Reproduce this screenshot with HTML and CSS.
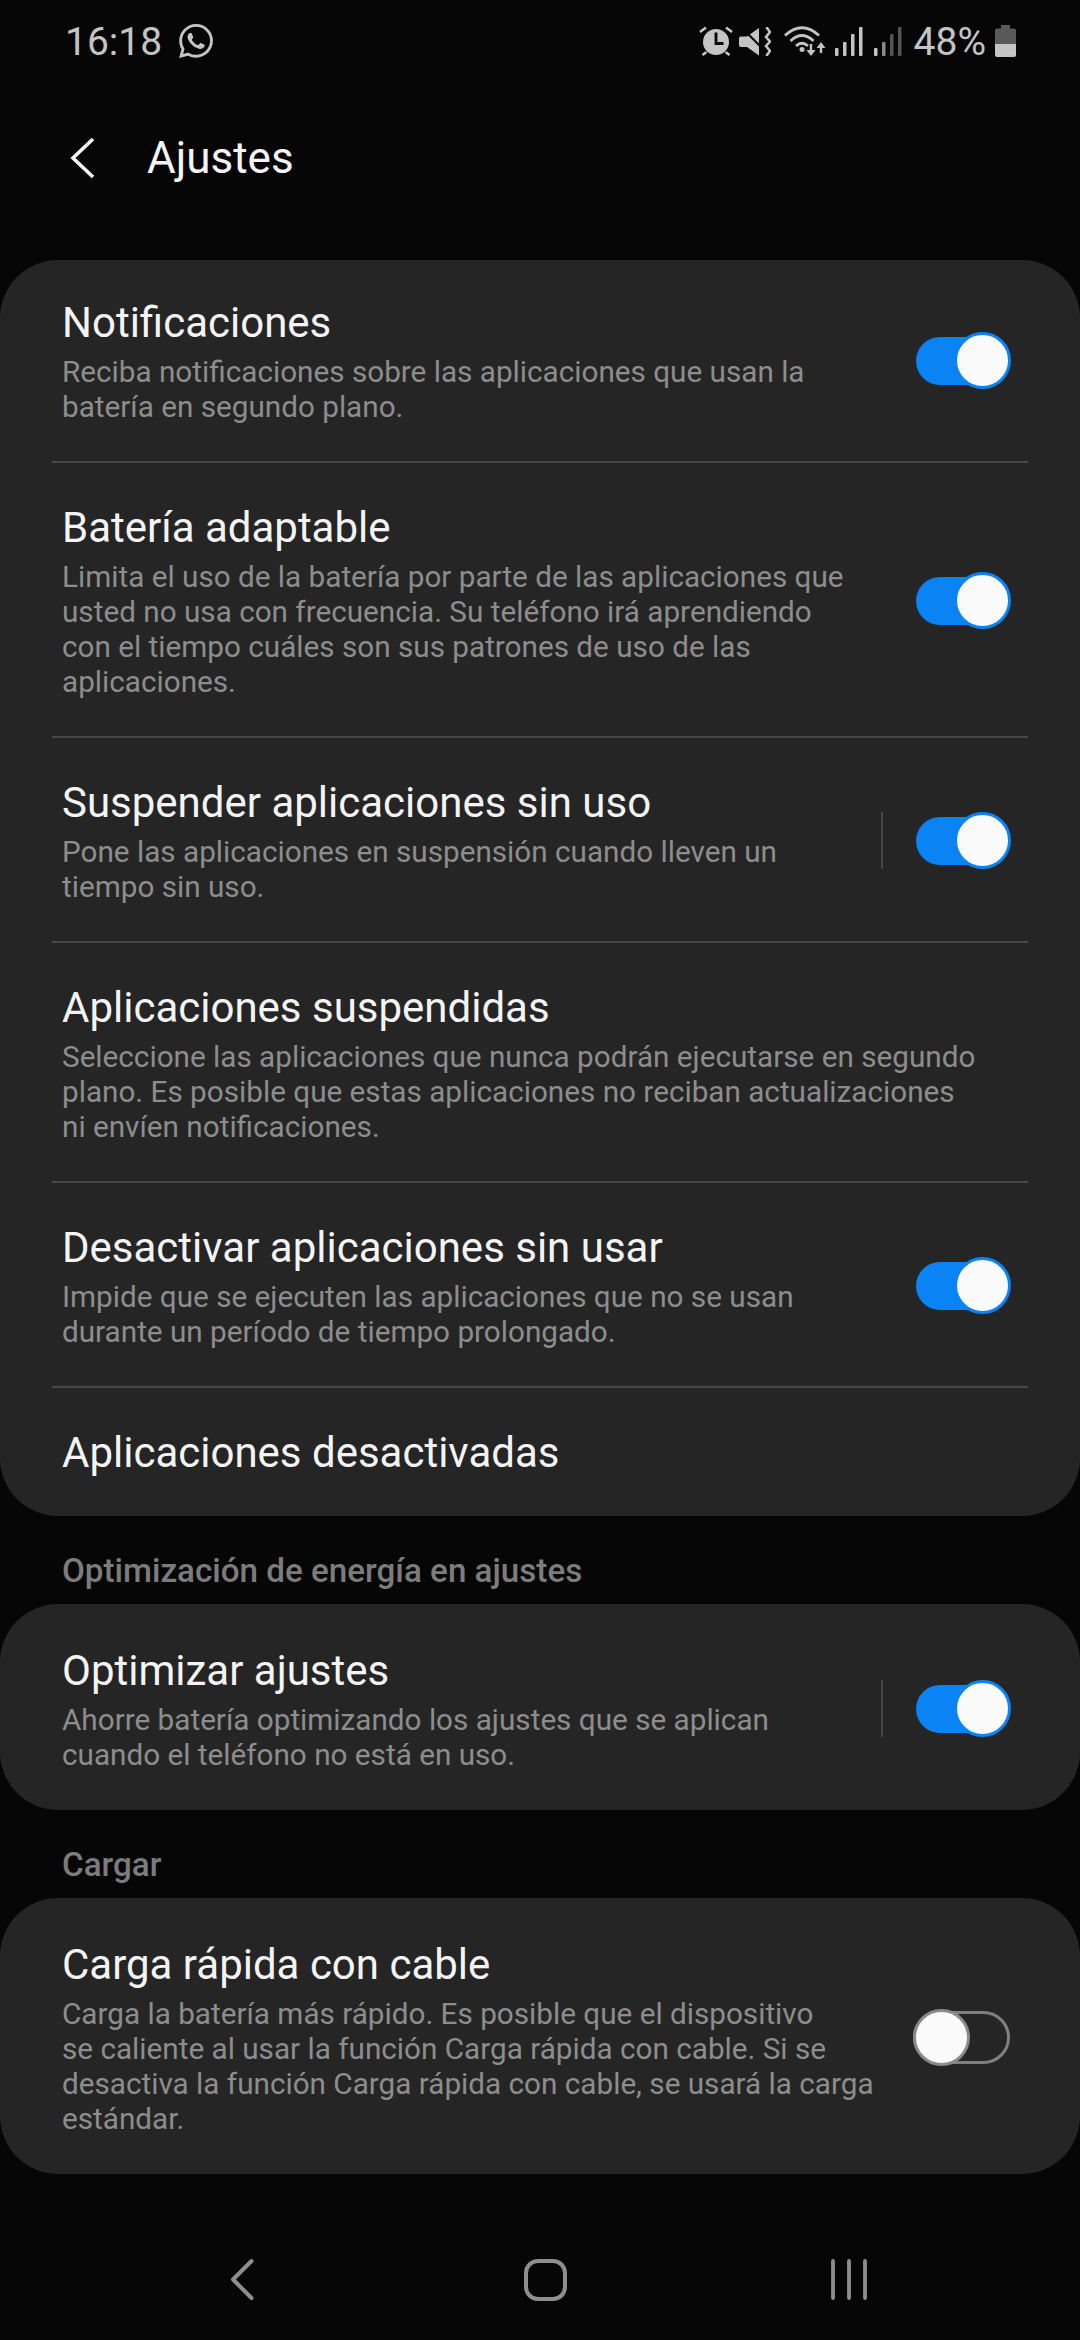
FILE: index.html
```html
<!DOCTYPE html>
<html lang="es">
<head>
  <meta charset="UTF-8">
  <meta name="viewport" content="width=device-width, initial-scale=1.0">
  <title>Ajustes</title>
  <link rel="stylesheet" href="styles.css">
</head>
<body>

  <div class="status-bar">
    <div class="status-left">
      <span class="status-time">16:18</span>
      <svg class="icon-whatsapp" viewBox="0 0 24 24" width="34" height="34"><path fill="#c4c4c4" d="M17.472 14.382c-.297-.149-1.758-.867-2.03-.967-.273-.099-.471-.148-.67.15-.197.297-.767.966-.94 1.164-.173.199-.347.223-.644.075-.297-.15-1.255-.463-2.39-1.475-.883-.788-1.48-1.761-1.653-2.059-.173-.297-.018-.458.13-.606.134-.133.298-.347.446-.52.149-.174.198-.298.298-.497.099-.198.05-.371-.025-.52-.075-.149-.669-1.612-.916-2.207-.242-.579-.487-.5-.669-.51-.173-.008-.371-.01-.57-.01-.198 0-.52.074-.792.372-.272.297-1.04 1.016-1.04 2.479 0 1.462 1.065 2.875 1.213 3.074.149.198 2.096 3.2 5.077 4.487.709.306 1.262.489 1.694.625.712.227 1.36.195 1.871.118.571-.085 1.758-.719 2.006-1.413.248-.694.248-1.289.173-1.413-.074-.124-.272-.198-.57-.347m-5.421 7.403h-.004a9.87 9.87 0 01-5.031-1.378l-.361-.214-3.741.982.998-3.648-.235-.374a9.86 9.86 0 01-1.51-5.26c.001-5.45 4.436-9.884 9.888-9.884 2.64 0 5.122 1.03 6.988 2.898a9.825 9.825 0 012.893 6.994c-.003 5.45-4.437 9.884-9.885 9.884m8.413-18.297A11.815 11.815 0 0012.05 0C5.495 0 .16 5.335.157 11.892c0 2.096.547 4.142 1.588 5.945L.057 24l6.305-1.654a11.882 11.882 0 005.683 1.448h.005c6.554 0 11.89-5.335 11.893-11.893a11.821 11.821 0 00-3.48-8.413Z"/></svg>
    </div>
    <div class="status-right">
      <!-- alarma -->
      <svg class="icon-alarm" viewBox="0 0 34 30" width="34" height="30">
        <circle cx="17" cy="16" r="13" fill="#c4c4c4"/>
        <path d="M1 6l6-4.500M33 6l-6-4.500M3.500 29l4-3M30.500 29l-4-3" stroke="#c4c4c4" stroke-width="2.600" fill="none"/>
        <path d="M17 6.500V17.500H24.500" stroke="#060606" stroke-width="2.800" fill="none"/>
      </svg>
      <!-- silencio + vibracion -->
      <svg class="icon-mute" viewBox="0 0 32 29" width="32" height="29">
        <path fill="#c4c4c4" d="M0 11.500Q0 9.500 2 9.500H8L20 1V28.500L8 20H2Q0 20 0 18Z"/>
        <path stroke="#060606" stroke-width="2.200" d="M3 1L22 20"/>
        <path stroke="#c4c4c4" stroke-width="2.600" fill="none" stroke-linecap="round" d="M28 1L31 5L27 10L31 14.500L27 19L31 24L28 28"/>
      </svg>
      <!-- wifi -->
      <svg class="icon-wifi" viewBox="0 0 43 32" width="43" height="32">
        <g stroke="#c4c4c4" stroke-width="2.800" fill="none">
          <path d="M1 10.500Q18 -5 35 10.500"/>
          <path d="M6.500 16Q18 5 29.500 16"/>
          <path d="M12 21Q18 15.500 24 21"/>
        </g>
        <circle cx="18" cy="24.500" r="2.500" fill="#c4c4c4"/>
        <path fill="#c4c4c4" d="M25.800 19h2.400v6h3.300L27 31l-4.500-6h3.300ZM35.800 28h2.400v-5h3.300L37 17l-4.500 6h3.300Z"/>
      </svg>
      <!-- señal 1 -->
      <svg class="icon-signal" viewBox="0 0 28 29" width="28" height="29">
        <g fill="#c4c4c4">
          <rect x="0" y="21" width="3.500" height="8" rx="1"/>
          <rect x="8" y="15" width="3.500" height="14" rx="1"/>
          <rect x="16" y="7" width="3.500" height="22" rx="1"/>
          <rect x="24" y="0" width="3.500" height="29" rx="1"/>
        </g>
      </svg>
      <!-- señal 2 -->
      <svg class="icon-signal second" viewBox="0 0 28 29" width="28" height="29">
        <rect x="0" y="21" width="3.500" height="8" rx="1" fill="#c4c4c4"/>
        <rect x="8" y="15" width="3.500" height="14" rx="1" fill="#8a8a8a"/>
        <rect x="16" y="7" width="3.500" height="22" rx="1" fill="#555"/>
        <rect x="24" y="0" width="3.500" height="29" rx="1" fill="#555"/>
      </svg>
      <span class="status-percent">48%</span>
      <!-- bateria -->
      <svg class="icon-battery" viewBox="0 0 21 32" width="21" height="32">
        <path fill="#595959" d="M6 0h9v3.500h4q2 0 2 2V19H0V5.500q0-2 2-2h4Z"/>
        <path fill="#c4c4c4" d="M0 19h21v11q0 2-2 2H2q-2 0-2-2Z"/>
      </svg>
    </div>
  </div>

  <header class="app-header">
    <svg class="back-arrow" viewBox="0 0 26 42" width="26" height="42"><path d="M24 2L4 21L24 40" stroke="#f5f5f5" stroke-width="3.600" fill="none"/></svg>
    <h1>Ajustes</h1>
  </header>

  <section class="card">
    <div class="row first">
      <div class="row-text">
        <div class="row-title">Notificaciones</div>
        <div class="row-desc">Reciba notificaciones sobre las aplicaciones que usan la<br>batería en segundo plano.</div>
      </div>
      <div class="toggle on"><span class="thumb"></span></div>
    </div>
    <div class="row">
      <div class="row-text">
        <div class="row-title">Batería adaptable</div>
        <div class="row-desc">Limita el uso de la batería por parte de las aplicaciones que<br>usted no usa con frecuencia. Su teléfono irá aprendiendo<br>con el tiempo cuáles son sus patrones de uso de las<br>aplicaciones.</div>
      </div>
      <div class="toggle on"><span class="thumb"></span></div>
    </div>
    <div class="row">
      <div class="row-text">
        <div class="row-title">Suspender aplicaciones sin uso</div>
        <div class="row-desc">Pone las aplicaciones en suspensión cuando lleven un<br>tiempo sin uso.</div>
      </div>
      <span class="v-line"></span>
      <div class="toggle on"><span class="thumb"></span></div>
    </div>
    <div class="row">
      <div class="row-text">
        <div class="row-title">Aplicaciones suspendidas</div>
        <div class="row-desc">Seleccione las aplicaciones que nunca podrán ejecutarse en segundo<br>plano. Es posible que estas aplicaciones no reciban actualizaciones<br>ni envíen notificaciones.</div>
      </div>
    </div>
    <div class="row">
      <div class="row-text">
        <div class="row-title">Desactivar aplicaciones sin usar</div>
        <div class="row-desc">Impide que se ejecuten las aplicaciones que no se usan<br>durante un período de tiempo prolongado.</div>
      </div>
      <div class="toggle on"><span class="thumb"></span></div>
    </div>
    <div class="row">
      <div class="row-text">
        <div class="row-title">Aplicaciones desactivadas</div>
      </div>
    </div>
  </section>

  <h2 class="section-label">Optimización de energía en ajustes</h2>

  <section class="card single">
    <div class="row">
      <div class="row-text">
        <div class="row-title">Optimizar ajustes</div>
        <div class="row-desc">Ahorre batería optimizando los ajustes que se aplican<br>cuando el teléfono no está en uso.</div>
      </div>
      <span class="v-line"></span>
      <div class="toggle on"><span class="thumb"></span></div>
    </div>
  </section>

  <h2 class="section-label">Cargar</h2>

  <section class="card single">
    <div class="row">
      <div class="row-text">
        <div class="row-title">Carga rápida con cable</div>
        <div class="row-desc">Carga la batería más rápido. Es posible que el dispositivo<br>se caliente al usar la función Carga rápida con cable. Si se<br>desactiva la función Carga rápida con cable, se usará la carga<br>estándar.</div>
      </div>
      <div class="toggle off"><span class="thumb"></span></div>
    </div>
  </section>

  <nav class="nav-bar">
    <svg viewBox="0 0 24 43" width="24" height="43"><path d="M21.500 3L3 21.500L21.500 40" stroke="#8e8e8e" stroke-width="4" stroke-linecap="round" stroke-linejoin="round" fill="none"/></svg>
    <span class="nav-home"></span>
    <svg viewBox="0 0 36 41" width="36" height="41"><path d="M2 2V39M18 2V39M34 2V39" stroke="#8e8e8e" stroke-width="3.800" stroke-linecap="round" fill="none"/></svg>
  </nav>

</body>
</html>
```

FILE: styles.css
```css
:root {
  --cor-fundo: #060606;
  --cor-card: #252525;
  --cor-titulo: #f4f4f4;
  --cor-desc: #8d8d8d;
  --cor-linha: #474747;
  --cor-azul: #0a84f4;
  --cor-status: #c4c4c4;
}

* {
  box-sizing: border-box;
}

body {
  margin: 0;
  width: 1080px;
  height: 2340px;
  overflow: hidden;
  background-color: var(--cor-fundo);
  font-family: Roboto, "Noto Sans", sans-serif;
}

.status-bar {
  height: 80px;
  padding: 2px 64px 0 65px;
  display: flex;
  justify-content: space-between;
  align-items: center;
  color: var(--cor-status);
}

.status-left {
  display: flex;
  align-items: center;
  gap: 17px;
}

.status-time {
  padding-top: 2px;
  font-size: 39px;
}

.status-right {
  display: flex;
  align-items: center;
}

.status-percent {
  padding-top: 2px;
  font-size: 39px;
  margin-left: 12px;
}

.icon-mute {
  margin-left: 6px;
}

.icon-wifi {
  margin-left: 13px;
}

.icon-signal {
  margin-left: 8px;
}

.icon-signal.second {
  margin-left: 11px;
}

.icon-battery {
  margin-left: 9px;
}

.app-header {
  height: 155px;
  margin-bottom: 25px;
  padding-left: 69px;
  display: flex;
  align-items: center;
}

.app-header h1 {
  margin: 0 0 0 52px;
  color: var(--cor-titulo);
  font-size: 44px;
  font-weight: 400;
}

.card {
  background-color: var(--cor-card);
  border-radius: 58px;
  padding: 0 52px;
}

.row {
  display: flex;
  align-items: center;
  padding: 39px 10px 37px;
  border-bottom: 2px solid var(--cor-linha);
}

.row.first {
  padding-top: 37px;
}

.row:last-child {
  border-bottom: none;
}

.card.single .row {
  padding-top: 41px;
  padding-bottom: 38px;
}

.row-text {
  flex: 1;
}

.row-title {
  color: var(--cor-titulo);
  font-size: 42px;
  line-height: 52px;
}

.row-desc {
  margin-top: 5px;
  color: var(--cor-desc);
  font-size: 29.700px;
  line-height: 35px;
}

.v-line {
  width: 2px;
  height: 57px;
  margin-right: 33px;
  background-color: var(--cor-linha);
}

.toggle {
  flex-shrink: 0;
  width: 94px;
  height: 48px;
  margin-right: 8px;
  border-radius: 24px;
  display: flex;
  align-items: center;
}

.toggle.on {
  background-color: var(--cor-azul);
  justify-content: flex-end;
}

.toggle.off {
  width: 97px;
  height: 53px;
  border: 3px solid #808080;
  border-radius: 27px;
  justify-content: flex-start;
}

.thumb {
  flex-shrink: 0;
  width: 57px;
  height: 57px;
  border-radius: 50%;
  background-color: #fafafa;
}

.toggle.on .thumb {
  margin-right: -1px;
  border: 3px solid var(--cor-azul);
}

.toggle.off .thumb {
  margin-left: -3px;
  border: 3px solid #8a8a8a;
}

.section-label {
  height: 88px;
  margin: 0;
  padding: 0 0 15px 62px;
  display: flex;
  align-items: flex-end;
  color: #7c7c7c;
  font-size: 33.200px;
  font-weight: 500;
  line-height: 36px;
}

.nav-bar {
  margin-top: 84px;
  padding-left: 230px;
  display: flex;
  align-items: center;
}

.nav-home {
  width: 43px;
  height: 42px;
  margin: 0 264px 0 270px;
  border: 4px solid #8e8e8e;
  border-radius: 14px;
}
```
